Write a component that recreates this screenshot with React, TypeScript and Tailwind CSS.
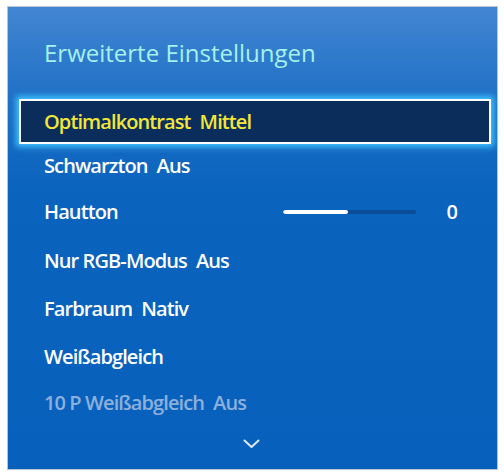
import React from 'react';

interface Item {
  label: string;
  value?: string;
  h: string;
  slider?: number;
  selected?: boolean;
  disabled?: boolean;
}

const items: Item[] = [
  { label: 'Optimalkontrast', value: 'Mittel', h: 'h-[45px]', selected: true },
  { label: 'Schwarzton', value: 'Aus', h: 'h-[44px]' },
  { label: 'Hautton', h: 'h-[48px]', slider: 49 },
  { label: 'Nur RGB-Modus', value: 'Aus', h: 'h-[49px]' },
  { label: 'Farbraum', value: 'Nativ', h: 'h-[48px]' },
  { label: 'Weißabgleich', h: 'h-[47px]' },
  { label: '10 P Weißabgleich', value: 'Aus', h: 'h-[46px]', disabled: true },
];

function Row({ item }: { item: Item }) {
  const color = item.selected
    ? 'text-[#f2e63a]'
    : item.disabled
      ? 'text-[#8cb0dc]'
      : 'text-white';
  return (
    <div
      className={`${item.h} flex items-center ${
        item.selected
          ? 'bg-[#0b2d5b] border-2 border-white shadow-[0_0_6px_3px_#3fc3ff] pl-[23px]'
          : 'pl-[25px]'
      }`}
    >
      <span className={`text-[20px] font-semibold tracking-[-0.9px] ${color}`}>
        {item.label}
        {item.value && <span className="ml-[9px]">{item.value}</span>}
      </span>
      {item.slider !== undefined && (
        <div className="ml-auto flex items-center">
          <div className="w-[133px] h-[4px] bg-[#0a4c98] rounded-full overflow-hidden">
            <div className="h-full bg-white rounded-full" style={{ width: `${item.slider}%` }} />
          </div>
          <span className="text-[20px] font-semibold text-white w-[75px] pr-[33px] text-right">0</span>
        </div>
      )}
    </div>
  );
}

export default function App() {
  return (
    <div className="w-[504px] h-[476px] bg-white pt-[6px] pl-[7px]" style={{ fontFamily: '"Open Sans", "Noto Sans", sans-serif' }}>
      <div className="w-[491px] h-[464px] border border-[#b9c4d0] bg-[linear-gradient(to_bottom,#4386d2_0%,#1f70c6_20%,#0a63bd_40%,#0761bc_100%)] flex flex-col">
        <div className="h-[92px] pl-[36px] pt-[30px]">
          <h1 className="text-[24px] leading-[32px] font-medium text-[#a4f1ec]">Erweiterte Einstellungen</h1>
        </div>
        <div className="ml-[11px] mr-[6px] flex flex-col">
          {items.map((it) => (
            <Row key={it.label} item={it} />
          ))}
        </div>
        <div className="flex justify-center pt-[13px] pr-[2px]">
          <svg width="17" height="10" viewBox="0 0 17 10" fill="none">
            <path d="M1.5 1.5 L8.5 8 L15.5 1.5" stroke="#dbe9f7" strokeWidth="2" strokeLinecap="round" strokeLinejoin="round" />
          </svg>
        </div>
      </div>
    </div>
  );
}
